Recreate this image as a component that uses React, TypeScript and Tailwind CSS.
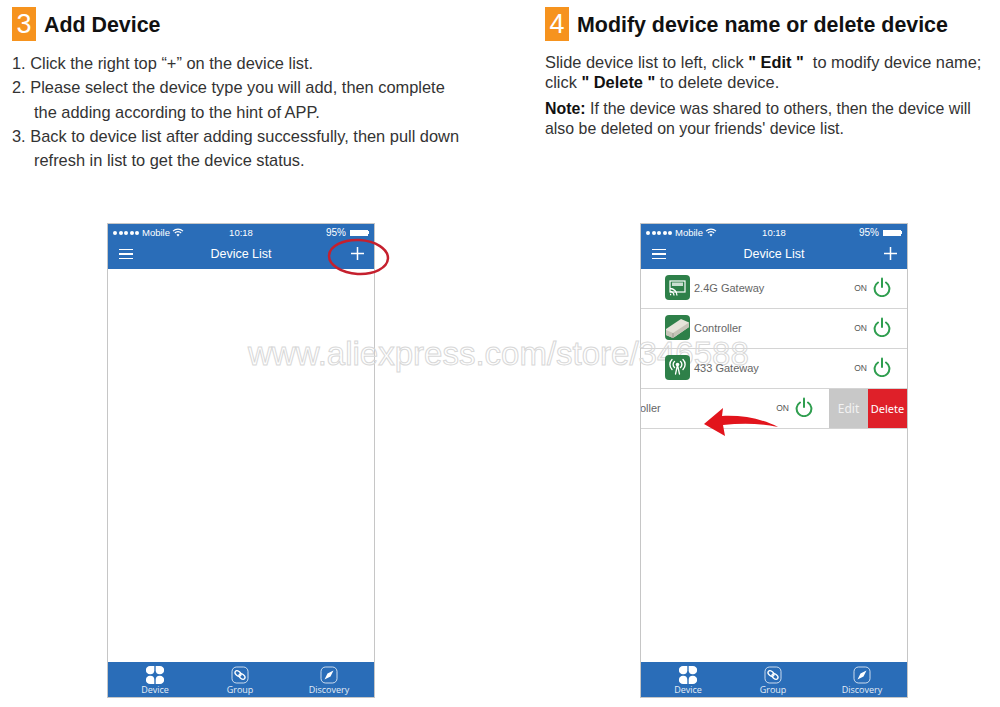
import type { ReactNode } from "react";

const sans = "font-['Liberation_Sans',Arial,sans-serif]";

function PowerIcon() {
  return (
    <svg width="18" height="20" viewBox="0 0 18 20" fill="none" stroke="#2f9e4f" strokeWidth="2" strokeLinecap="round">
      <path d="M5 5.500a7.400 7.400 0 1 0 8 0" />
      <path d="M9 1.500v8.500" />
    </svg>
  );
}

function GatewayIcon() {
  return (
    <svg width="25" height="25" viewBox="0 0 25 25">
      <rect width="25" height="25" rx="4" fill="#2e8049" />
      <rect x="5" y="6" width="15" height="11" fill="none" stroke="#fff" strokeWidth="1.200" />
      <rect x="7" y="7.500" width="11" height="3.500" fill="#fff" opacity="0.75" />
      <path d="M5 19.500h1.200M5 16.500a4 4 0 0 1 4 4M5 13.500a7 7 0 0 1 7 7" fill="none" stroke="#fff" strokeWidth="1.300" />
    </svg>
  );
}

function ControllerIcon() {
  return (
    <svg width="25" height="25" viewBox="0 0 25 25">
      <rect width="25" height="25" rx="4" fill="#2e8049" />
      <path d="M1 14L16 4l8 3.500v4.500L8 23l-7-3z" fill="#e6e4da" />
      <path d="M1 15l7 3 16-10.500V12L8 23l-7-3z" fill="#c6c4b8" />
      <path d="M8 18v5" stroke="#9a9a90" strokeWidth="1" />
    </svg>
  );
}

function AntennaIcon() {
  return (
    <svg width="25" height="25" viewBox="0 0 25 25" fill="none" stroke="#fff" strokeLinecap="round">
      <rect width="25" height="25" rx="4" fill="#2e8049" stroke="none" />
      <circle cx="12.500" cy="9.500" r="1.800" fill="#fff" stroke="none" />
      <path d="M12.500 10L10.500 19M12.500 10L14.500 19" strokeWidth="1.300" />
      <path d="M9.500 6.500a4 4 0 0 0 0 6M15.500 6.500a4 4 0 0 1 0 6M7 4.500a7 7 0 0 0 0 10M18 4.500a7 7 0 0 1 0 10" strokeWidth="1.400" />
    </svg>
  );
}

function WifiIcon() {
  return (
    <svg width="12" height="9" viewBox="0 0 12 9" fill="none" stroke="#fff" strokeWidth="1.100">
      <path d="M1 3.200a7 7 0 0 1 10 0M2.800 5a4.500 4.500 0 0 1 6.400 0" />
      <path d="M4.500 6.800a2.100 2.100 0 0 1 3 0L6 8.500z" fill="#fff" stroke="none" />
    </svg>
  );
}

function DeviceTabIcon() {
  return (
    <svg width="18" height="18" viewBox="0 0 18 18" fill="#fff">
      <path d="M4 0h4.300v4.300a4 4 0 0 1-4 4H4a4 4 0 0 1 0-8.300z" />
      <path d="M14 0h-4.300v4.300a4 4 0 0 0 4 4h.3a4 4 0 0 0 0-8.300z" />
      <path d="M4 18h4.300v-4.300a4 4 0 0 0-4-4H4a4 4 0 0 0 0 8.300z" />
      <path d="M14 18h-4.300v-4.300a4 4 0 0 1 4-4h.3a4 4 0 0 1 0 8.300z" />
    </svg>
  );
}

function GroupTabIcon() {
  return (
    <svg width="18" height="18" viewBox="0 0 18 18" fill="none" stroke="#fff">
      <rect x="1" y="1" width="16" height="16" rx="4.500" strokeWidth="0.900" opacity="0.85" />
      <ellipse cx="7" cy="7.500" rx="3.400" ry="2.200" transform="rotate(40 7 7.500)" strokeWidth="1.300" />
      <ellipse cx="11" cy="10.500" rx="3.400" ry="2.200" transform="rotate(40 11 10.500)" strokeWidth="1.300" />
    </svg>
  );
}

function DiscoveryTabIcon() {
  return (
    <svg width="18" height="18" viewBox="0 0 18 18" fill="none">
      <rect x="1" y="1" width="16" height="16" rx="4.500" stroke="#fff" strokeWidth="0.900" opacity="0.85" />
      <path d="M13.500 4.500L10.500 10.500 4.500 13.500 7.500 7.500z" fill="#fff" />
    </svg>
  );
}

function Tab({ icon, label, className }: { icon: ReactNode; label: string; className: string }) {
  return (
    <div className={`flex w-[60px] flex-col items-center ${className}`}>
      <div className="h-[18px]">{icon}</div>
      <span className="font-['Open_Sans',sans-serif] text-[9px] leading-3 text-[#e3ecf6]">{label}</span>
    </div>
  );
}

function DeviceRow({ icon, name }: { icon: ReactNode; name: string }) {
  return (
    <div className="flex h-10 items-center border-b border-[#d4d4d4] pb-[2px] pl-6">
      <span className="relative z-10 flex">{icon}</span>
      <span className="relative z-10 ml-1 text-[11px] text-[#666]">{name}</span>
      <span className="ml-auto text-[8.500px] text-[#555]">ON</span>
      <span className="mr-4 ml-[6px] flex -translate-y-[1px]">
        <PowerIcon />
      </span>
    </div>
  );
}

function Phone({ children }: { children?: ReactNode }) {
  return (
    <div className={`flex h-[475px] w-[268px] flex-col border border-[#c6c6c6] bg-white ${sans}`}>
      <div className="h-[45px] shrink-0 bg-[#2a6db8] text-white">
        <div className="relative flex h-[17px] items-center px-[5px] text-[9.500px]">
          <span className="mr-[3px] flex gap-[1.500px]">
            {[0, 1, 2, 3, 4].map((dot) => (
              <i key={dot} className="block h-1 w-1 rounded-full bg-white" />
            ))}
          </span>
          <span className="mr-[2px]">Mobile</span>
          <WifiIcon />
          <span className="absolute left-0 w-full text-center">10:18</span>
          <span className="mr-1 ml-auto text-[10px]">95%</span>
          <span className="flex items-center">
            <span className="block h-[6px] w-[18px] border border-white bg-white" />
            <span className="block h-[3px] w-[1px] bg-white" />
          </span>
        </div>
        <div className="relative flex h-7 items-center justify-center pb-[3px]">
          <span className="absolute left-[11px] flex flex-col gap-[3px]">
            <i className="block h-[1.500px] w-[14px] bg-white" />
            <i className="block h-[1.500px] w-[14px] bg-white" />
            <i className="block h-[1.500px] w-[14px] bg-white" />
          </span>
          <span className="text-[12.500px]">Device List</span>
          <svg className="absolute right-[10px]" width="13" height="13" viewBox="0 0 13 13" stroke="#fff" strokeWidth="1.500">
            <path d="M6.500 0v13M0 6.500h13" />
          </svg>
        </div>
      </div>
      <div className="flex-1 overflow-hidden">{children}</div>
      <div className="flex h-[35px] shrink-0 items-start bg-[#2a6db8] pt-1">
        <Tab className="ml-[17px]" icon={<DeviceTabIcon />} label="Device" />
        <Tab className="ml-[25px]" icon={<GroupTabIcon />} label="Group" />
        <Tab className="ml-[29px]" icon={<DiscoveryTabIcon />} label="Discovery" />
      </div>
    </div>
  );
}

function Heading({ num, title }: { num: string; title: string }) {
  return (
    <div className="flex items-center">
      <span className="flex h-[34px] w-6 items-center justify-center bg-[#f6931e] text-[27px] font-normal text-white">{num}</span>
      <h2 className="mt-[3px] ml-2 text-[21.400px] leading-none font-bold text-[#111]">{title}</h2>
    </div>
  );
}

export default function App() {
  return (
    <div className={`relative h-[707px] w-[1000px] overflow-hidden bg-white ${sans}`}>
      <div className="flex pt-[7px]">
        <div className="w-[545px] pl-3">
          <Heading num="3" title="Add Device" />
          <div className="mt-[10px] text-[16.400px] leading-[24.300px] text-[#333]">
            <p>1. Click the right top “+” on the device list.</p>
            <p>2. Please select the device type you will add, then complete</p>
            <p className="pl-[22px]">the adding according to the hint of APP.</p>
            <p>3. Back to device list after adding successfully, then pull down</p>
            <p className="pl-[22px]">refresh in list to get the device status.</p>
          </div>
        </div>
        <div className="w-[455px] whitespace-nowrap">
          <Heading num="4" title="Modify device name or delete device" />
          <div className="mt-[11px] leading-5 text-[#333]">
            <p className="text-[16.400px]">
              Slide device list to left, click <b className="text-[#111]">" Edit "</b>&nbsp; to modify device name;
              <br />
              click <b className="text-[#111]">" Delete "</b> to delete device.
            </p>
            <p className="mt-[7px] text-[15.900px]">
              <b className="text-[#111]">Note:</b> If the device was shared to others, then the device will
              <br />
              also be deleted on your friends' device list.
            </p>
          </div>
        </div>
      </div>

      <div className="mt-[51px] flex pl-[107px]">
        <Phone />
        <div className="ml-[265px]">
          <Phone>
            <DeviceRow icon={<GatewayIcon />} name="2.4G Gateway" />
            <DeviceRow icon={<ControllerIcon />} name="Controller" />
            <DeviceRow icon={<AntennaIcon />} name="433 Gateway" />
            <div className="flex h-10 items-center overflow-hidden border-b border-[#d4d4d4]">
              <span className="mb-[2px] ml-[-28px] text-[11px] text-[#666]">Controller</span>
              <span className="mb-[2px] ml-auto text-[8.500px] text-[#555]">ON</span>
              <span className="mb-[2px] ml-[6px] flex -translate-y-[1px]">
                <PowerIcon />
              </span>
              <span className="ml-4 flex h-full w-[39px] items-center justify-center bg-[#c8c8c8] font-['Noto_Sans',sans-serif] text-[12px] text-[#f2f2f2]">Edit</span>
              <span className="flex h-full w-[39px] items-center justify-center bg-[#df2029] font-['Noto_Sans',sans-serif] text-[11px] text-white">Delete</span>
            </div>
          </Phone>
        </div>
      </div>

      {/* red ring round the plus button */}
      <svg className="absolute top-[238px] left-[327px]" width="63" height="38" viewBox="0 0 63 38" fill="none">
        <ellipse cx="31.500" cy="19" rx="29.500" ry="17" stroke="#c5202e" strokeWidth="2.500" transform="rotate(3 31.500 19)" />
      </svg>

      {/* swipe arrow */}
      <svg className="absolute top-[407px] left-[703px]" width="76" height="30" viewBox="0 0 76 30">
        <path d="M1 17L20 1l-1 8C40 8 60 12 75 20 56 16 38 16 20 18l2 11z" fill="#e2141c" />
      </svg>

      {/* store watermark */}
      <div className="absolute top-[336px] left-[248px] text-[33px] leading-9 whitespace-nowrap text-transparent [-webkit-text-stroke:1px_#d8d8d8]">
        www.aliexpress.com/store/346588
      </div>
    </div>
  );
}
